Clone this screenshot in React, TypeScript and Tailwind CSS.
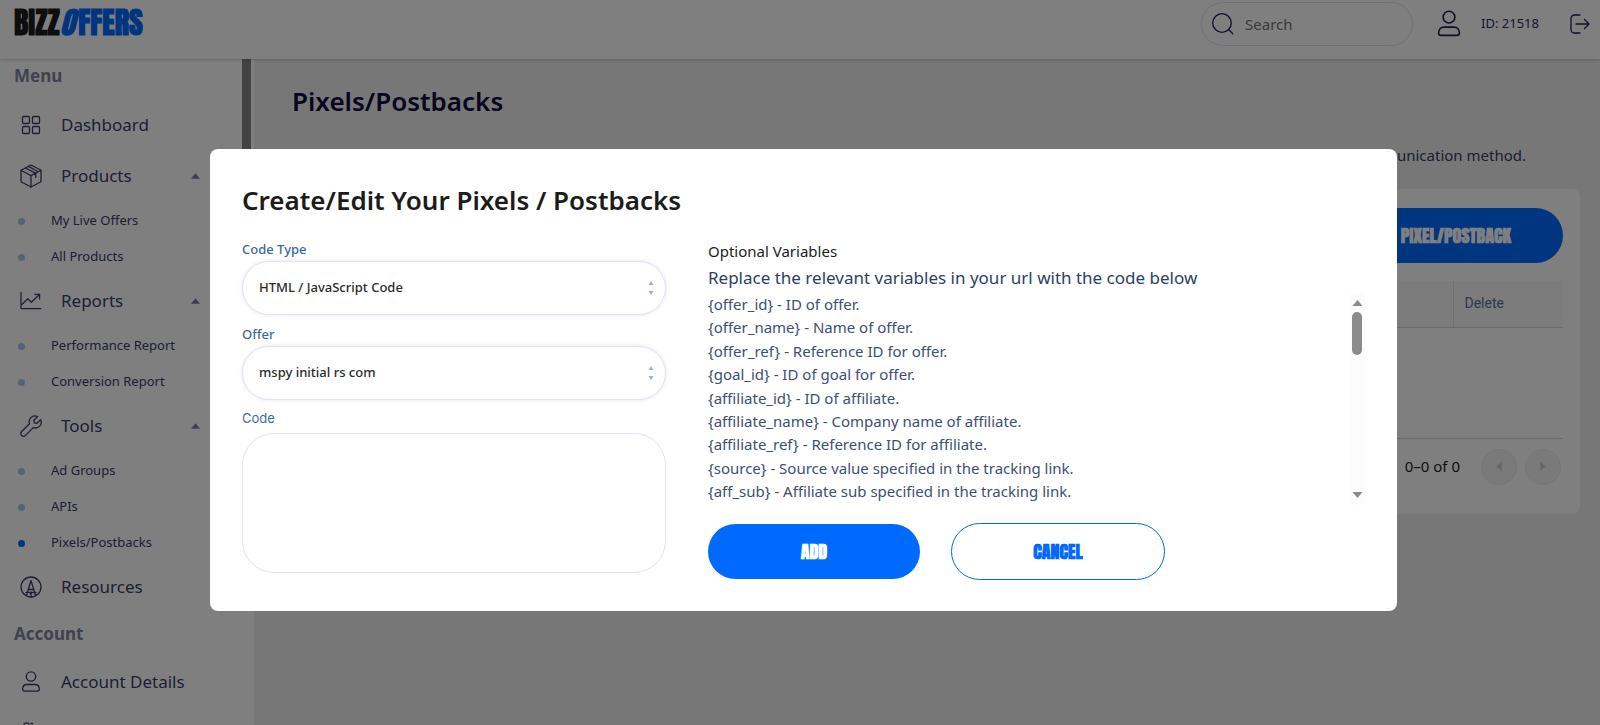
import { useState } from "react"
import type { ReactNode } from "react"

interface NavItem {
  label: string
  icon: ReactNode
  children?: string[]
}

const variables = [
  "{offer_id} - ID of offer.",
  "{offer_name} - Name of offer.",
  "{offer_ref} - Reference ID for offer.",
  "{goal_id} - ID of goal for offer.",
  "{affiliate_id} - ID of affiliate.",
  "{affiliate_name} - Company name of affiliate.",
  "{affiliate_ref} - Reference ID for affiliate.",
  "{source} - Source value specified in the tracking link.",
  "{aff_sub} - Affiliate sub specified in the tracking link.",
]

function Icon({ children, className = "size-6" }: { children: ReactNode; className?: string }) {
  return (
    <svg
      viewBox="0 0 24 24"
      fill="none"
      stroke="currentColor"
      strokeWidth={1.3}
      strokeLinecap="round"
      strokeLinejoin="round"
      aria-hidden="true"
      className={className}
    >
      {children}
    </svg>
  )
}

const userShape = (
  <>
    <circle cx="12" cy="6.500" r="4.700" />
    <path d="M8 14.500h8c2.700 0 4.300 2 4.300 4.600 0 1.200-.8 2-2 2H5.700c-1.200 0-2-.8-2-2 0-2.600 1.600-4.600 4.300-4.600z" />
  </>
)

const menu: NavItem[] = [
  {
    label: "Dashboard",
    icon: (
      <Icon>
        <rect x="3.500" y="3.500" width="7" height="7" rx="1.200" />
        <rect x="13.500" y="3.500" width="7" height="7" rx="1.200" />
        <rect x="3.500" y="13.500" width="7" height="7" rx="1.200" />
        <rect x="13.500" y="13.500" width="7" height="7" rx="1.200" />
      </Icon>
    ),
  },
  {
    label: "Products",
    icon: (
      <Icon>
        <path d="M12 1l10 5.300v11.400L12 23 2 17.700V6.300z" />
        <path d="M2 6.300l10 5.300 10-5.300M12 11.600V23M6.500 4l10.300 5.300v4.200M9.500 2.400l9.700 5.300" />
      </Icon>
    ),
    children: ["My Live Offers", "All Products"],
  },
  {
    label: "Reports",
    icon: (
      <Icon>
        <path d="M2 3.500v16.200h19.800M2.800 15.500l6-5.800 3.600 3.600 8-7.800M15.800 5.300h4.800v4.600" />
      </Icon>
    ),
    children: ["Performance Report", "Conversion Report"],
  },
  {
    label: "Tools",
    icon: (
      <Icon>
        <path d="M18.600 2.600l-3.700 3.600.4 2.700 2.700.4 3.600-3.700c1.100 2.500.6 5.100-1.200 6.800-1.700 1.600-4 1.900-6.100 1.200L6.500 21.400a2.700 2.700 0 0 1-3.900-3.900l7.900-7.700c-.8-2.200-.4-4.500 1.300-6.200 1.800-1.700 4.400-2.100 6.800-1z" />
      </Icon>
    ),
    children: ["Ad Groups", "APIs", "Pixels/Postbacks"],
  },
  {
    label: "Resources",
    icon: (
      <Icon>
        <circle cx="12" cy="12" r="10" />
        <path d="M7.500 20.500L12 5.500l4.500 15M9.200 14.500h5.600M12 17v5M7 17.500c2-.6 4 0 5 1.500 1-1.500 3-2.100 5-1.500" />
      </Icon>
    ),
  },
]

function NavLink({ item }: { item: NavItem }) {
  return (
    <a href="#" className="flex h-[51px] items-center pr-[42px] pl-[19px] text-[17px] text-[#3b3b6e]">
      {item.icon}
      <span className="ml-[18px] flex-1">{item.label}</span>
      {item.children && (
        <svg viewBox="0 0 10 6" className="h-[6px] w-[9px]" fill="#7c7ca3" aria-hidden="true">
          <path d="M5 0l5 6H0z" />
        </svg>
      )}
    </a>
  )
}

function Sidebar() {
  return (
    <aside className="flex w-[254px] shrink-0 bg-white">
      <nav className="min-w-0 flex-1 overflow-hidden">
        <h2 className="flex h-10 items-center pb-[6px] pl-[14px] text-[17px] font-bold text-[#82829f]">Menu</h2>
        <ul>
          {menu.map((item) => (
            <li key={item.label}>
              <NavLink item={item} />
              {item.children && (
                <ul className="pt-[2px]">
                  {item.children.map((child) => (
                    <li key={child}>
                      <a href="#" className="flex h-9 items-center pl-[18px] text-[13px] text-[#3b3b6e]">
                        <span
                          className={
                            child === "Pixels/Postbacks"
                              ? "size-[7px] rounded-full bg-[#006aff]"
                              : "size-[7px] rounded-full bg-[#a9c4ee]"
                          }
                        />
                        <span className="ml-[26px]">{child}</span>
                      </a>
                    </li>
                  ))}
                </ul>
              )}
            </li>
          ))}
        </ul>
        <h2 className="flex h-11 items-center pl-[14px] text-[17px] font-bold text-[#82829f]">Account</h2>
        <NavLink item={{ label: "Account Details", icon: <Icon>{userShape}</Icon> }} />
        <NavLink
          item={{
            label: "",
            icon: (
              <Icon>
                <path d="M5 3c2-1.500 4-1.500 5 0M12 2.500h1.500M3 5h18v16H3z" />
              </Icon>
            ),
          }}
        />
      </nav>
      <div className="w-[12px] shrink-0">
        <div className="h-[400px] w-[9px] bg-[#868686]" />
      </div>
    </aside>
  )
}

function Header() {
  return (
    <header className="z-10 flex h-[59px] shrink-0 items-center bg-white pr-2 pb-[11px] pl-[14px] shadow-[0_1px_3px_rgba(0,0,0,0.2)]">
      <a
        href="#"
        className="pb-[2px] font-['Impact','Anton','Liberation_Sans_Narrow',sans-serif] text-[30px] leading-[46px] font-bold text-[#1c1c1c]"
      >
        BIZZ<span className="text-[#006aff]"><i className="mr-1">O</i>FFERS</span>
      </a>
      <label className="ml-auto flex h-11 w-[212px] items-center rounded-full border border-[#dfdff0] pl-[9px] text-[#1e1e50]">
        <Icon>
          <circle cx="11" cy="11" r="9.300" />
          <path d="M17.800 17.800l4 4" />
        </Icon>
        <input
          type="search"
          aria-label="Search"
          placeholder="Search"
          className="ml-[10px] w-40 bg-transparent text-[15px] outline-none placeholder:text-[#757575]"
        />
      </label>
      <Icon className="ml-[21px] size-[30px] text-[#1e1e50]">{userShape}</Icon>
      <span className="ml-[17px] text-[13px] text-[#2c2c5e]">ID: 21518</span>
      <button type="button" aria-label="Log out" className="ml-[29px] text-[#1e1e50]">
        <Icon>
          <path d="M12 3H6.500A3.500 3.500 0 0 0 3 6.500v11A3.500 3.500 0 0 0 6.500 21H12M8 12h13M16.500 7.500L21 12l-4.500 4.500" />
        </Icon>
      </button>
    </header>
  )
}

function PageContent() {
  return (
    <main className="min-w-0 flex-1 bg-[#efefef] pt-[22px] pr-5 pl-[38px]">
      <h1 className="text-[26px] leading-[40px] font-semibold text-[#0c0c3c]">Pixels/Postbacks</h1>
      <p className="mt-[22px] pr-[54px] text-right text-[15px] leading-6 text-[#3b3b6e]">communication method.</p>
      <section className="mt-[22px] h-[325px] rounded-[8px] bg-white px-[17px] pt-[19px]">
        <button
          type="button"
          className="ml-auto block h-[55px] rounded-full bg-[#006aff] px-[52px] font-['Impact','Anton','Liberation_Sans_Narrow',sans-serif] text-[18px] font-bold text-white"
        >
          ADD PIXEL/POSTBACK
        </button>
        <table className="mt-[18px] w-full text-left font-['Roboto'] text-[14px]">
          <thead>
            <tr className="h-[46px] border-b border-[#d4d4dc] bg-[#f8f8f9] text-[#5c7299]">
              <th className="font-normal">Pixel</th>
              <th className="w-[110px] border-l border-[#dcdcec] pl-[11px] font-normal">Delete</th>
            </tr>
          </thead>
          <tbody>
            <tr className="h-[111px] border-b border-[#d4d4dc]">
              <td colSpan={2} />
            </tr>
          </tbody>
        </table>
        <div className="mt-[10px] flex items-center justify-end gap-2 pr-[2px]">
          <span className="mr-[13px] text-[15px] text-[#1c1c1c]">0–0 of 0</span>
          <button type="button" disabled aria-label="Previous page" className="grid size-9 place-items-center rounded-full border border-[#ececf0] bg-[#f4f4f5]">
            <svg viewBox="0 0 6 10" className="h-[9px] w-[6px]" fill="#cdcddb"><path d="M6 0v10L0 5z" /></svg>
          </button>
          <button type="button" disabled aria-label="Next page" className="grid size-9 place-items-center rounded-full border border-[#ececf0] bg-[#f4f4f5]">
            <svg viewBox="0 0 6 10" className="h-[9px] w-[6px]" fill="#cdcddb"><path d="M0 0v10l6-5z" /></svg>
          </button>
        </div>
      </section>
    </main>
  )
}

function SelectField({ id, label, value }: { id: string; label: string; value: string }) {
  return (
    <div className="mb-[11px]">
      <label htmlFor={id} className="block h-5 text-[13px] leading-4 font-medium text-[#3a6b9f]">{label}</label>
      <div className="relative">
        <select
          id={id}
          className="h-[54px] w-full appearance-none rounded-full border border-[#e3e1f3] bg-white px-4 text-[13px] font-medium text-[#2b2b2b] shadow-[0_0_4px_rgba(90,80,160,0.15)]"
        >
          <option>{value}</option>
        </select>
        <svg viewBox="0 0 6 14" className="pointer-events-none absolute top-5 right-3 h-[14px] w-[6px]" fill="#9fb1cb" aria-hidden="true">
          <path d="M3 0l2.500 4h-5zM3 14l2.500-4h-5z" />
        </svg>
      </div>
    </div>
  )
}

function PixelDialog() {
  const [code, setCode] = useState("")

  return (
    <div className="fixed inset-0 z-20 flex items-start justify-center bg-black/50 pt-[149px] pl-[7px]">
      <div role="dialog" aria-modal="true" aria-labelledby="dialog-title" className="w-full max-w-[1187px] rounded-[8px] bg-white px-8 pt-8 pb-[31px]">
        <h2 id="dialog-title" className="text-[26px] leading-[38px] font-semibold text-[#1c1c1c]">
          Create/Edit Your Pixels / Postbacks
        </h2>
        <div className="mt-[22px] flex gap-[42px]">
          <div className="w-[424px] shrink-0">
            <SelectField id="code-type" label="Code Type" value="HTML / JavaScript Code" />
            <SelectField id="offer" label="Offer" value="mspy initial rs com" />
            <label htmlFor="code" className="block h-[22px] font-['Inter'] text-[13px] leading-[14px] text-[#3a6b9f]">
              Code
            </label>
            <textarea
              id="code"
              value={code}
              onChange={(e) => setCode(e.target.value)}
              className="block h-[140px] w-full resize-none rounded-[32px] border border-[#e3e1f3] p-4 text-[13px] outline-none"
            />
          </div>
          <div className="min-w-0 flex-1">
            <h3 className="text-[15px] leading-5 text-[#1c1c1c]">Optional Variables</h3>
            <p className="mt-[3px] mb-px text-[17px] leading-7 text-[#2b3f66]">
              Replace the relevant variables in your url with the code below
            </p>
            <div className="flex h-[212px]">
              <ul className="flex flex-1 flex-col justify-between overflow-hidden pb-[2px] text-[15px] leading-[23px] text-[#3d4f74]">
                {variables.map((v) => (
                  <li key={v}>{v}</li>
                ))}
              </ul>
              {/* Scrollbar */}
              <div className="flex w-4 flex-col items-center bg-[#fcfcfc] py-[7px]">
                <svg viewBox="0 0 10 6" className="h-[6px] w-[11px]" fill="#8b8b8b"><path d="M5 0l5 6H0z" /></svg>
                <div className="mt-[6px] h-[43px] w-[10px] rounded-full bg-[#8b8b8b]" />
                <svg viewBox="0 0 10 6" className="mt-auto h-[6px] w-[11px]" fill="#8b8b8b"><path d="M5 6l5-6H0z" /></svg>
              </div>
            </div>
            <div className="mt-[18px] flex items-center gap-[31px] font-['Impact','Anton','Liberation_Sans_Narrow',sans-serif] text-[18px] font-bold">
              <button type="button" className="h-[55px] w-[212px] rounded-full bg-[#006aff] text-white">ADD</button>
              <button type="button" className="h-[57px] w-[214px] rounded-full border border-[#006aff] text-[#006aff]">CANCEL</button>
            </div>
          </div>
        </div>
      </div>
    </div>
  )
}

export default function App() {
  return (
    <div className="flex h-screen flex-col overflow-hidden bg-[#efefef] font-['Noto_Sans',sans-serif]">
      <Header />
      <div className="flex min-h-0 flex-1">
        <Sidebar />
        <PageContent />
      </div>
      <PixelDialog />
    </div>
  )
}
